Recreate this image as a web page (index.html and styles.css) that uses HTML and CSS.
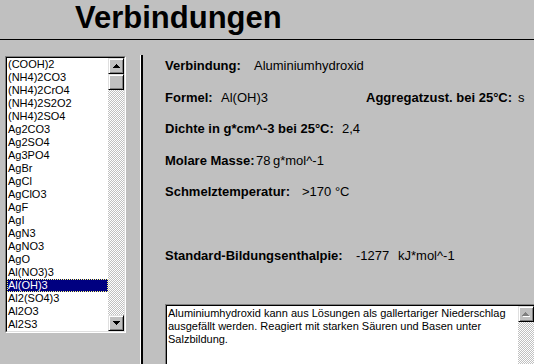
FILE: index.html
```html
<!DOCTYPE html>
<html lang="de">
<head>
  <meta charset="UTF-8">
  <link rel="stylesheet" href="styles.css">
  <title>Verbindungen</title>
</head>
<body>
  <header class="top">
    <h1>Verbindungen</h1>
  </header>
  <main class="form">
    <div class="sunken listbox">
      <div class="frame">
        <ul class="items">
          <li>(COOH)2</li>
          <li>(NH4)2CO3</li>
          <li>(NH4)2CrO4</li>
          <li>(NH4)2S2O2</li>
          <li>(NH4)2SO4</li>
          <li>Ag2CO3</li>
          <li>Ag2SO4</li>
          <li>Ag3PO4</li>
          <li>AgBr</li>
          <li>AgCl</li>
          <li>AgClO3</li>
          <li>AgF</li>
          <li>AgI</li>
          <li>AgN3</li>
          <li>AgNO3</li>
          <li>AgO</li>
          <li>Al(NO3)3</li>
          <li class="sel">Al(OH)3</li>
          <li>Al2(SO4)3</li>
          <li>Al2O3</li>
          <li>Al2S3</li>
        </ul>
        <div class="vscroll">
          <span class="btn"><svg width="7" height="4" viewBox="0 0 7 4"><path d="M3 0h1v1h-1zM2 1h3v1h-3zM1 2h5v1h-5zM0 3h7v1h-7z"/></svg></span>
          <span class="btn"></span>
          <span class="track"></span>
          <span class="btn"><svg width="7" height="4" viewBox="0 0 7 4"><path d="M0 0h7v1h-7zM1 1h5v1h-5zM2 2h3v1h-3zM3 3h1v1h-1z"/></svg></span>
        </div>
      </div>
    </div>

    <div class="divider"></div>

    <section class="panel">
      <div class="row"><b class="w89">Verbindung:</b><span>Aluminiumhydroxid</span></div>
      <div class="row"><b class="w56">Formel:</b><span class="w145">Al(OH)3</span><b class="w152">Aggregatzust. bei 25°C:</b><span>s</span></div>
      <div class="row"><b class="w177">Dichte in g*cm^-3 bei 25°C:</b><span>2,4</span></div>
      <div class="row"><b class="w91">Molare Masse:</b><span class="w17">78</span><span>g*mol^-1</span></div>
      <div class="row"><b class="w137">Schmelztemperatur:</b><span>&gt;170 °C</span></div>
      <div class="row later"><b class="w191">Standard-Bildungsenthalpie:</b><span class="w42">-1277</span><span>kJ*mol^-1</span></div>

      <div class="sunken memo">
        <div class="frame">
          <p>Aluminiumhydroxid kann aus Lösungen als gallertariger Niederschlag ausgefällt werden. Reagiert mit starken Säuren und Basen unter Salzbildung.</p>
          <div class="vscroll">
            <span class="btn off"><svg width="8" height="5" viewBox="0 0 8 5"><path fill="#fff" d="M4 1h1v1h-1zM3 2h3v1h-3zM2 3h5v1h-5zM1 4h7v1h-7z"/><path fill="#808080" d="M3 0h1v1h-1zM2 1h3v1h-3zM1 2h5v1h-5zM0 3h7v1h-7z"/></svg></span>
            <span class="track"></span>
          </div>
        </div>
      </div>
    </section>
  </main>
</body>
</html>
```

FILE: styles.css
```css
*, *::before, *::after {
  margin: 0;
  padding: 0;
  box-sizing: border-box;
}

html, body {
  height: 100%;
}

body {
  display: flex;
  flex-direction: column;
  overflow: hidden;
  background: #c0c0c0;
  color: #000;
  font-family: "Liberation Sans", Arial, sans-serif;
}

.top {
  height: 40px;
  flex: none;
  padding-left: 75px;
  border-bottom: 1px solid #000;
}

h1 {
  font-size: 31px;
  line-height: 35px;
  font-weight: bold;
}

.form {
  flex: 1;
  display: flex;
  min-height: 0;
}

/* win95 style sunken box: gray/white outside, black/light inside */
.sunken {
  border: 1px solid;
  border-color: #808080 #fff #fff #808080;
}

.frame {
  display: flex;
  height: 100%;
  border: 1px solid;
  border-color: #000 #dfdfdf #dfdfdf #000;
}

.listbox {
  flex: none;
  width: 121px;
  height: 277px;
  margin: 16px 0 0 5px;
}

.items {
  list-style: none;
  width: 101px;
  background: #fff;
  font-size: 11px;
  line-height: 13px;
}

.items li {
  height: 13px;
  padding-left: 1px;
  white-space: nowrap;
}

.items li.sel {
  background: #000080;
  color: #fff;
  outline: 1px dotted #ffff80;
  outline-offset: -1px;
}

.vscroll {
  flex: none;
  width: 16px;
  display: flex;
  flex-direction: column;
  background-color: #fff;
  background-image: conic-gradient(#c0c0c0 25%, #fff 0 50%, #c0c0c0 0 75%, #fff 0);
  background-size: 2px 2px;
}

.btn {
  flex: none;
  width: 16px;
  height: 16px;
  display: flex;
  align-items: center;
  justify-content: center;
  background: #c0c0c0;
  border: 1px solid;
  border-color: #dfdfdf #000 #000 #dfdfdf;
  box-shadow: inset 1px 1px #fff, inset -1px -1px #808080;
}

.btn svg {
  display: block;
}

.track {
  flex: 1;
}

.divider {
  flex: none;
  width: 3px;
  margin: 15px 0 0 14px;
  border-left: 1px solid #fff;
  background: #000;
}

.panel {
  flex: 1;
  padding: 19px 0 0 22px;
  font-size: 13px;
  line-height: 14px;
}

.row {
  display: flex;
  height: 31.5px;
  white-space: nowrap;
}

.row > * {
  flex: none;
}

.row.later {
  margin-top: 32.5px;
}

.w17 { width: 17px; }
.w42 { width: 42px; }
.w56 { width: 56px; }
.w89 { width: 89px; }
.w91 { width: 91px; }
.w137 { width: 137px; }
.w145 { width: 145px; }
.w152 { width: 152px; }
.w177 { width: 177px; }
.w191 { width: 191px; }

/* the memo box is cut off by the window bottom */
.memo {
  width: 371px;
  height: 60px;
  margin-top: 23.5px;
  border-bottom-width: 0;
}

.memo .frame {
  border-bottom-width: 0;
}

.memo p {
  flex: 1;
  padding: 1px 0 0 1px;
  background: #fff;
  font-size: 11px;
  line-height: 13px;
}
```
